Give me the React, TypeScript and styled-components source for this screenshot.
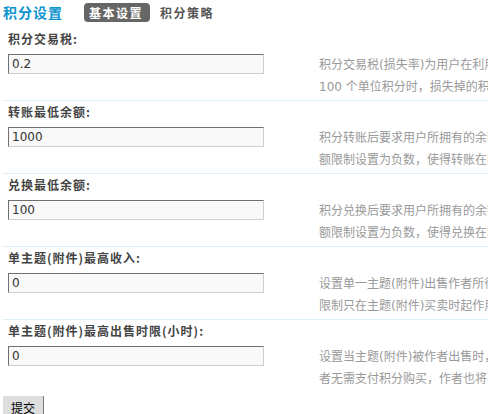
import React from 'react';
import styled, { createGlobalStyle } from 'styled-components';

const GlobalStyle = createGlobalStyle`
  html, body {
    margin: 0;
    padding: 0;
    background: #fff;
    overflow: hidden;
  }
  body {
    font-family: 'DejaVu Sans', 'Noto Sans CJK SC', sans-serif;
    font-size: 12px;
  }
`;

const Page = styled.div`
  width: 488px;
  padding-left: 3px;
  box-sizing: border-box;
  overflow: hidden;
`;

const Header = styled.div`
  display: flex;
  align-items: flex-start;
  height: 24px;
  padding-top: 3px;
`;

const Title = styled.h3`
  margin: 0;
  font-family: 'Noto Sans CJK SC', sans-serif;
  font-size: 14px;
  line-height: 19px;
  font-weight: bold;
  letter-spacing: 1px;
  color: #0d94cf;
`;

const Tab = styled.span<{ $active?: boolean }>`
  display: inline-block;
  height: 19px;
  line-height: 19px;
  margin-left: ${p => (p.$active ? '21px' : '4px')};
  padding: ${p => (p.$active ? '0 7px 0 5px' : '0 6px')};
  border-radius: 4px;
  background: ${p => (p.$active ? '#666' : 'transparent')};
  color: ${p => (p.$active ? '#fff' : '#555')};
  font-family: 'Noto Sans CJK SC', sans-serif;
  font-size: 12px;
  font-weight: bold;
  letter-spacing: 1.5px;
`;

const Block = styled.div<{ $first?: boolean }>`
  border-top: 1px dotted ${p => (p.$first ? 'transparent' : '#bfe0f2')};
`;

const Label = styled.div`
  padding-left: 5px;
  height: 21px;
  line-height: 21px;
  margin-bottom: 5px;
  font-family: 'Noto Sans CJK SC', sans-serif;
  font-size: 12px;
  font-weight: bold;
  letter-spacing: 1px;
  color: #444;
`;

const ValueRow = styled.div`
  display: flex;
  align-items: flex-start;
  padding: 0 0 2px 5px;
`;

const TextInput = styled.input`
  flex: none;
  box-sizing: border-box;
  width: 256px;
  height: 20px;
  margin: 0;
  padding: 0 3px;
  background: #f9f9f9;
  border-style: solid;
  border-width: 1px;
  border-color: #6f6f6f #cfcfcf #cfcfcf #6f6f6f;
  font-family: 'DejaVu Sans', sans-serif;
  font-size: 12px;
  color: #333;
  outline: none;
`;

const Desc = styled.div`
  flex: 1;
  min-width: 0;
  overflow: hidden;
  margin-left: 55px;
  line-height: 22px;
  white-space: nowrap;
  color: #999;
  font-family: 'DejaVu Sans', 'Noto Sans CJK SC', sans-serif;
  font-size: 12px;
`;

const SubmitButton = styled.button`
  margin-top: 4px;
  height: 24px;
  padding: 0 8px;
  background: #ddd;
  border: none;
  border-right: 1px solid #777;
  border-bottom: 1px solid #777;
  font-family: 'Noto Sans CJK SC', sans-serif;
  font-size: 12px;
  color: #000;
`;

const settings = [
  {
    label: '积分交易税:',
    value: '0.2',
    lines: [
      '积分交易税(损失率)为用户在利用积分进行交易时扣除的税率',
      '100 个单位积分时，损失掉的积分为 20 个单位',
    ],
  },
  {
    label: '转账最低余额:',
    value: '1000',
    lines: [
      '积分转账后要求用户所拥有的余额最小数值',
      '额限制设置为负数，使得转账在限额内可以透支',
    ],
  },
  {
    label: '兑换最低余额:',
    value: '100',
    lines: [
      '积分兑换后要求用户所拥有的余额最小数值',
      '额限制设置为负数，使得兑换在限额内可以透支',
    ],
  },
  {
    label: '单主题(附件)最高收入:',
    value: '0',
    lines: [
      '设置单一主题(附件)出售作者所得的最高税后积分收入',
      '限制只在主题(附件)买卖时起作用，0 为不限制',
    ],
  },
  {
    label: '单主题(附件)最高出售时限(小时):',
    value: '0',
    lines: [
      '设置当主题(附件)被作者出售时，系统允许的最长出售时限',
      '者无需支付积分购买，作者也将不再获得相应积分',
    ],
  },
];

const App: React.FC = () => {
  return (
    <>
      <GlobalStyle />
      <Page>
        <Header>
          <Title>积分设置</Title>
          <Tab $active>基本设置</Tab>
          <Tab>积分策略</Tab>
        </Header>

        {settings.map((s, i) => (
          <Block key={s.label} $first={i === 0}>
            <Label>{s.label}</Label>
            <ValueRow>
              <TextInput type="text" defaultValue={s.value} />
              <Desc>
                {s.lines.map(line => (
                  <div key={line}>{line}</div>
                ))}
              </Desc>
            </ValueRow>
          </Block>
        ))}

        <SubmitButton type="button">提交</SubmitButton>
      </Page>
    </>
  );
};

export default App;
